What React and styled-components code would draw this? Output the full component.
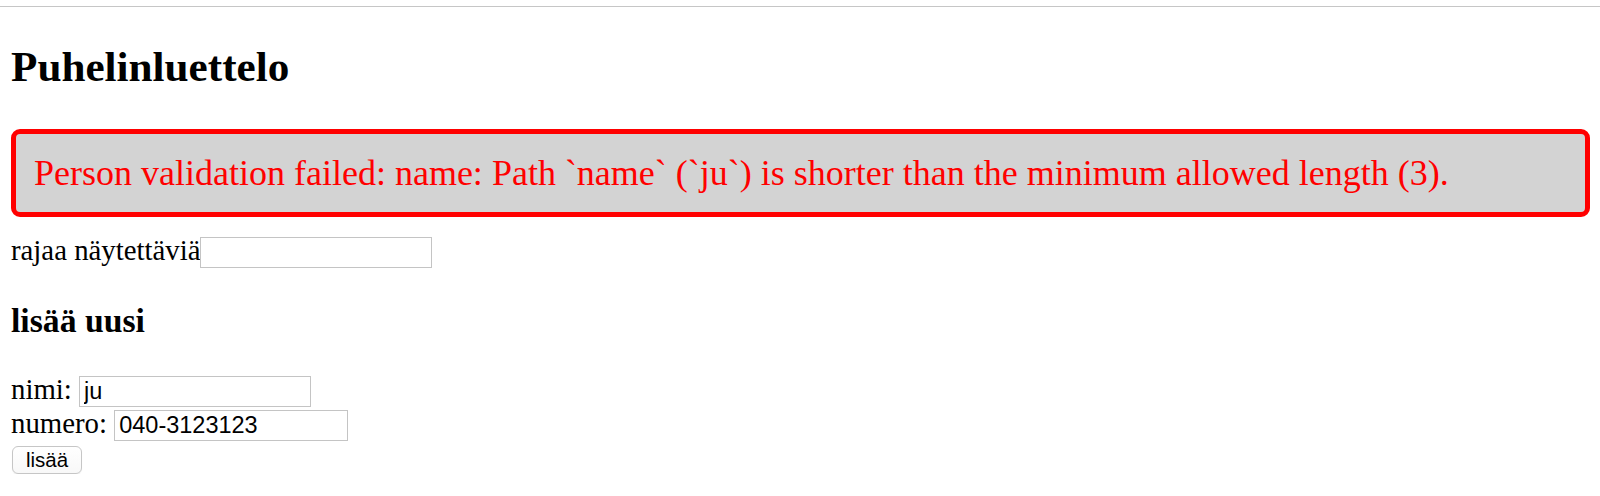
import React, { useState } from "react";
import styled, { createGlobalStyle } from "styled-components";

const GlobalStyle = createGlobalStyle`
  html, body {
    margin: 0;
    padding: 0;
    background: #ffffff;
  }
  body {
    font-family: "Liberation Serif", "Times New Roman", Times, serif;
    color: #000000;
  }
`;

const ChromeEdge = styled.div`
  height: 6px;
  border-bottom: 1px solid #c6c6c6;
`;

const Page = styled.div`
  padding: 0 10px 0 11px;
`;

const Title = styled.h2`
  font-size: 43.2px;
  line-height: 50px;
  font-weight: bold;
  margin: 35px 0 37px;
`;

const Notification = styled.div`
  color: #ff0000;
  background: #d3d3d3;
  font-size: 36px;
  border: 5px solid #ff0000;
  border-radius: 9px;
  padding: 18px;
  margin-bottom: 17px;
`;

const Row = styled.div`
  font-size: 28.8px;
`;

const TextInput = styled.input`
  box-sizing: border-box;
  width: ${(p) => p.$width || 232}px;
  height: 31px;
  margin: 0;
  padding: 0 4px;
  font-family: "Liberation Sans", Arial, sans-serif;
  font-size: 23.5px;
  color: #000000;
  background: #ffffff;
  border: 1px solid #c4c4c4;
  border-radius: 0;
  outline: none;
  vertical-align: baseline;
`;

const SectionTitle = styled.h3`
  font-size: 33.7px;
  font-weight: bold;
  margin: 33.7px 0;
`;

const SubmitButton = styled.button`
  box-sizing: border-box;
  height: 28px;
  margin: 0 0 0 1px;
  padding: 0 13px;
  font-family: "Liberation Sans", Arial, sans-serif;
  font-size: 20.5px;
  color: #000000;
  background: linear-gradient(#ffffff, #f8f8f8);
  border: 1px solid #c6c6c6;
  border-radius: 6px;
  box-shadow: 0 1px 1px rgba(0, 0, 0, 0.06);
  cursor: pointer;
`;

export default function App() {
  const [filter, setFilter] = useState("");
  const [name, setName] = useState("ju");
  const [number, setNumber] = useState("040-3123123");

  return (
    <>
      <GlobalStyle />
      <ChromeEdge />
      <Page>
        <Title>Puhelinluettelo</Title>
        <Notification>
          Person validation failed: name: Path `name` (`ju`) is shorter than the minimum allowed length (3).
        </Notification>
        <Row>
          rajaa näytettäviä
          <TextInput value={filter} onChange={(e) => setFilter(e.target.value)} />
        </Row>
        <SectionTitle>lisää uusi</SectionTitle>
        <form onSubmit={(e) => e.preventDefault()}>
          <Row>
            nimi: <TextInput value={name} onChange={(e) => setName(e.target.value)} />
          </Row>
          <Row>
            numero: <TextInput $width={234} value={number} onChange={(e) => setNumber(e.target.value)} />
          </Row>
          <Row>
            <SubmitButton type="submit">lisää</SubmitButton>
          </Row>
        </form>
      </Page>
    </>
  );
}
